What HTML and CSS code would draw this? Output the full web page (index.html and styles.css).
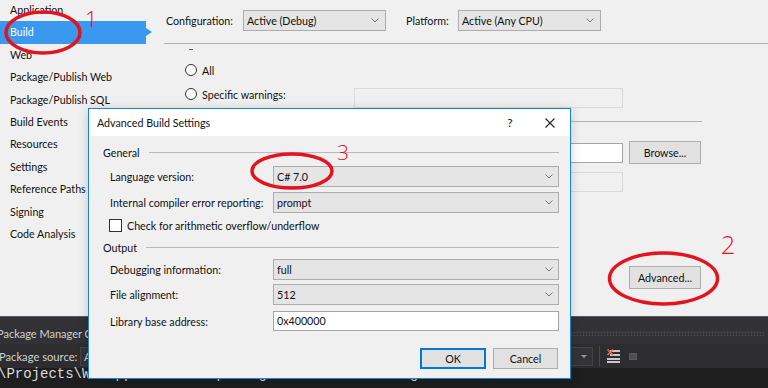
FILE: index.html
```html
<!DOCTYPE html>
<html>
<head>
<meta charset="utf-8">
<title>Build - Advanced Build Settings</title>
<link rel="stylesheet" href="styles.css">
</head>
<body>
<div class="app">
  <div class="main">
    <nav class="sidebar">
      <div class="nav-item first">Application</div>
      <div class="nav-item active">Build</div>
      <div class="nav-item">Web</div>
      <div class="nav-item">Package/Publish Web</div>
      <div class="nav-item">Package/Publish SQL</div>
      <div class="nav-item">Build Events</div>
      <div class="nav-item">Resources</div>
      <div class="nav-item">Settings</div>
      <div class="nav-item">Reference Paths</div>
      <div class="nav-item">Signing</div>
      <div class="nav-item">Code Analysis</div>
    </nav>
    <section class="content">
      <div class="config-bar">
        <span class="lbl">Configuration:</span>
        <div class="combo cfg"><span>Active (Debug)</span><svg class="chev" width="8" height="5" viewBox="0 0 8 5"><path d="M0.5 0.5 L4 4 L7.5 0.5" fill="none" stroke="#777" stroke-width="1"/></svg></div>
        <span class="lbl plat">Platform:</span>
        <div class="combo cfg"><span>Active (Any CPU)</span><svg class="chev" width="8" height="5" viewBox="0 0 8 5"><path d="M0.5 0.5 L4 4 L7.5 0.5" fill="none" stroke="#777" stroke-width="1"/></svg></div>
      </div>
      <div class="rule"></div>
      <div class="page">
        <div class="dash"></div>
        <div class="radio-row"><span class="radio"></span><span class="radio-label">All</span></div>
        <div class="radio-row"><span class="radio"></span><span class="radio-label">Specific warnings:</span><div class="tb tb-off tb-warn"></div></div>
        <div class="rule rule-wide"></div>
        <div class="path-row first"><div class="tb tb-on tb-path"></div><div class="btn">Browse...</div></div>
        <div class="path-row second"><div class="tb tb-off tb-path"></div></div>
        <div class="adv-row"><div class="btn">Advanced...</div></div>
      </div>
    </section>
  </div>
  <div class="pm">
    <div class="pm-title"><span>Package Manager Console</span><span class="grip"></span></div>
    <div class="pm-toolbar">
      <span class="pm-src">Package source:</span>
      <div class="pm-combo"><span>All</span><span class="tri"></span></div>
      <span class="pm-sep"></span>
      <svg class="pm-clear" width="13" height="14" viewBox="0 0 13 14">
        <rect x="3" y="1" width="10" height="2" fill="#c8c8c8"/>
        <rect x="3" y="5" width="10" height="2" fill="#c8c8c8"/>
        <rect x="0" y="9" width="13" height="2" fill="#c8c8c8"/>
        <rect x="0" y="12" width="13" height="2" fill="#c8c8c8"/>
        <path d="M0.5 0.5 L6 6 M6 0.5 L0.5 6" stroke="#e2674f" stroke-width="1.6"/>
      </svg>
      <span class="pm-square"></span>
    </div>
    <div class="pm-console">\Projects\WebApplication1\packages&gt; Install-Package</div>
  </div>
</div>

<div class="dialog">
  <div class="dlg-title">
    <span class="dlg-caption">Advanced Build Settings</span>
    <span class="dlg-help">?</span>
    <span class="dlg-close"><svg width="10" height="10" viewBox="0 0 10 10"><path d="M0.5 0.5 L9.5 9.5 M9.5 0.5 L0.5 9.5" stroke="#222" stroke-width="1.1"/></svg></span>
  </div>
  <div class="dlg-body">
    <div class="grp g1">General</div>
    <div class="frow r-lang"><span class="flbl">Language version:</span><div class="combo dcombo"><span>C# 7.0</span><svg class="chev" width="8" height="5" viewBox="0 0 8 5"><path d="M0.5 0.5 L4 4 L7.5 0.5" fill="none" stroke="#777" stroke-width="1"/></svg></div></div>
    <div class="frow r-int"><span class="flbl">Internal compiler error reporting:</span><div class="combo dcombo"><span>prompt</span><svg class="chev" width="8" height="5" viewBox="0 0 8 5"><path d="M0.5 0.5 L4 4 L7.5 0.5" fill="none" stroke="#777" stroke-width="1"/></svg></div></div>
    <div class="crow"><span class="cbox"></span><span>Check for arithmetic overflow/underflow</span></div>
    <div class="grp g2">Output</div>
    <div class="frow r-dbg"><span class="flbl">Debugging information:</span><div class="combo dcombo"><span>full</span><svg class="chev" width="8" height="5" viewBox="0 0 8 5"><path d="M0.5 0.5 L4 4 L7.5 0.5" fill="none" stroke="#777" stroke-width="1"/></svg></div></div>
    <div class="frow r-file"><span class="flbl">File alignment:</span><div class="combo dcombo"><span>512</span><svg class="chev" width="8" height="5" viewBox="0 0 8 5"><path d="M0.5 0.5 L4 4 L7.5 0.5" fill="none" stroke="#777" stroke-width="1"/></svg></div></div>
    <div class="frow r-lib"><span class="flbl">Library base address:</span><div class="tb tb-on dtb">0x400000</div></div>
    <div class="dlg-buttons"><div class="btn dbtn ok">OK</div><div class="btn dbtn cancel">Cancel</div></div>
  </div>
</div>

<svg class="marks" width="768" height="388" viewBox="0 0 768 388">
  <ellipse cx="43" cy="32.5" rx="37" ry="20.5" fill="none" stroke="#e3141f" stroke-width="3.5"/>
  <text x="85" y="27" class="num n1">1</text>
  <ellipse cx="292" cy="171" rx="40" ry="17" fill="none" stroke="#e3141f" stroke-width="3.5"/>
  <text x="337" y="160" class="num n3">3</text>
  <ellipse cx="663.5" cy="278.5" rx="54" ry="25.5" fill="none" stroke="#e3141f" stroke-width="3.5"/>
  <text x="721" y="254" class="num n2">2</text>
</svg>
</body>
</html>
```
FILE: styles.css
```css
* { box-sizing: border-box; }
html, body { margin: 0; padding: 0; }
body {
  width: 768px;
  height: 388px;
  overflow: hidden;
  position: relative;
  background: #f0f0f0;
  font-family: Lato, "Open Sans", sans-serif;
  font-size: 10.7px;
  color: #111;
}
.app { display: flex; flex-direction: column; height: 388px; }
.main { display: flex; height: 316px; }

/* sidebar */
.sidebar { width: 152px; flex: none; display: flex; flex-direction: column; }
.nav-item { height: 22.4px; line-height: 22.4px; padding-left: 10px; width: 146px; position: relative; white-space: nowrap; }
.nav-item.first { margin-top: -1px; }
.nav-item.active { background: #3a98ef; color: #fff; }
.nav-item.active::after {
  content: ""; position: absolute; left: 146px; top: 7px;
  border-left: 6px solid #3a98ef; border-top: 4px solid transparent; border-bottom: 4px solid transparent;
}

/* content */
.content { flex: 1; display: flex; flex-direction: column; }
.config-bar { height: 43px; display: flex; align-items: flex-start; padding: 10px 0 0 14px; }
.config-bar .lbl { width: 77px; line-height: 21px; flex: none; }
.config-bar .lbl.plat { width: 52px; margin-left: 20px; }
.combo {
  height: 21px; display: flex; align-items: center; justify-content: space-between;
  background: #e5e5e5; border: 1px solid #acacac; padding: 0 6px 0 3px; flex: none;
}
.combo.cfg { width: 143px; }
.chev { flex: none; }
.rule { height: 1px; background: #b4b4b4; margin-left: 12px; flex: none; }

.page { display: flex; flex-direction: column; padding-left: 33px; }
.dash { height: 14px; }
.dash::before { content: ""; display: block; margin: 5px 0 0 4px; width: 4px; height: 1px; background: #555; }
.radio-row { height: 24px; display: flex; align-items: center; }
.radio { width: 12px; height: 12px; border: 1px solid #333; border-radius: 50%; background: #fff; margin-right: 5px; flex: none; }
.radio-label { width: 152px; flex: none; }
.tb { height: 20px; border: 1px solid #d9d9d9; background: #f0f0f0; flex: none; }
.tb-on { background: #fff; border-color: #a5a5a5; }
.tb-warn { width: 269px; align-self: flex-start; margin-top: 6px; }
.rule-wide { margin-left: -21px; width: 538px; margin-top: 15px; }
.path-row { display: flex; align-items: center; height: 23px; }
.path-row.first { margin-top: 19px; }
.path-row.second { margin-top: 8px; height: 20px; }
.tb-path { width: 269px; margin-left: 169px; margin-right: 6px; }
.btn {
  height: 23px; width: 72px; background: #e1e1e1; border: 1px solid #adadad;
  display: flex; align-items: center; justify-content: center; flex: none;
}
.adv-row { display: flex; margin-top: 74px; padding-left: 444px; }

/* package manager */
.pm { height: 72px; background: #2d2d30; border-top: 1px solid #5a5a5e; color: #d0d0d0; display: flex; flex-direction: column; }
.pm-title { height: 27px; display: flex; align-items: center; padding-top: 6px; margin-left: -3px; background: #323236; font-size: 11px; }
.pm-title span:first-child { white-space: nowrap; }
.grip {
  flex: 1; height: 5px; margin: 0 4px 0 8px;
  background-image: radial-gradient(circle, #4c4c50 0.8px, transparent 1.1px);
  background-size: 3px 3px;
}
.pm-toolbar { height: 24px; display: flex; align-items: center; font-size: 11.2px; }
.pm-src { margin-left: -1px; width: 81px; white-space: nowrap; }
.pm-combo {
  width: 513px; height: 19px; border: 1px solid #434346; background: #333337;
  display: flex; align-items: center; justify-content: space-between; padding: 0 5px 0 3px;
}
.tri { width: 0; height: 0; border-top: 3px solid #999; border-left: 3px solid transparent; border-right: 3px solid transparent; }
.pm-sep { width: 1px; height: 20px; background: #4a4a4e; margin-left: 6px; }
.pm-clear { margin-left: 7px; }
.pm-square { width: 8px; height: 7px; background: #4f4f53; border: 1px solid #5a5a5e; margin-left: 9px; }
.pm-console {
  flex: 1; background: #1e1e1e; color: #dcdcdc; margin: 0;
  font-family: "Liberation Mono", "DejaVu Sans Mono", monospace; font-size: 14px; line-height: 13px;
  padding-top: 0; text-indent: -2px; white-space: nowrap;
}

/* dialog */
.dialog {
  position: absolute; left: 88px; top: 108px; width: 483px; height: 271px;
  border: 1px solid #1883d7; background: #f0f0f0; display: flex; flex-direction: column;
  box-shadow: 0 2px 10px rgba(0,0,0,0.18);
}
.dlg-title { height: 27px; background: #fff; display: flex; align-items: center; padding-left: 8px; flex: none; }
.dlg-caption { flex: 1; }
.dlg-help { width: 40px; text-align: center; font-size: 12px; }
.dlg-close { width: 40px; display: flex; justify-content: center; }
.dlg-body { padding: 0 11px 0 14px; display: flex; flex-direction: column; }
.grp { display: flex; align-items: center; height: 17px; }
.grp::after { content: ""; flex: 1; height: 1px; background: #b9b9b9; margin-left: 9px; }
.g1 { margin-top: 8px; }
.g2 { margin-top: 7px; }
.frow { display: flex; align-items: center; height: 21px; padding-left: 7px; }
.flbl { width: 163px; flex: none; }
.dcombo { flex: 1; padding-right: 5px; }
.r-lang { margin-top: 5px; }
.r-int { margin-top: 5px; }
.r-dbg { margin-top: 3px; }
.r-file { margin-top: 4px; }
.r-lib { margin-top: 6px; height: 20px; }
.dtb { flex: 1; padding-left: 3px; line-height: 18px; }
.crow { display: flex; align-items: center; height: 14px; margin-top: 5px; padding-left: 6px; }
.cbox { width: 13px; height: 13px; border: 1px solid #333; background: #fff; margin-right: 5px; }
.dlg-buttons { display: flex; justify-content: flex-end; gap: 7px; margin-top: 17px; padding-right: 1px; }
.dbtn { height: 21px; }
.ok { width: 66px; border-color: #0078d7; box-shadow: inset 0 0 0 1px #0078d7; }
.cancel { width: 65px; }

/* annotations */
.marks { position: absolute; left: 0; top: 0; pointer-events: none; }
.num { fill: #e3141f; font-family: "Open Sans", "DejaVu Sans", sans-serif; font-weight: 300; }
.n1 { font-size: 22px; }
.n3 { font-size: 21px; }
.n2 { font-size: 25px; }
```
